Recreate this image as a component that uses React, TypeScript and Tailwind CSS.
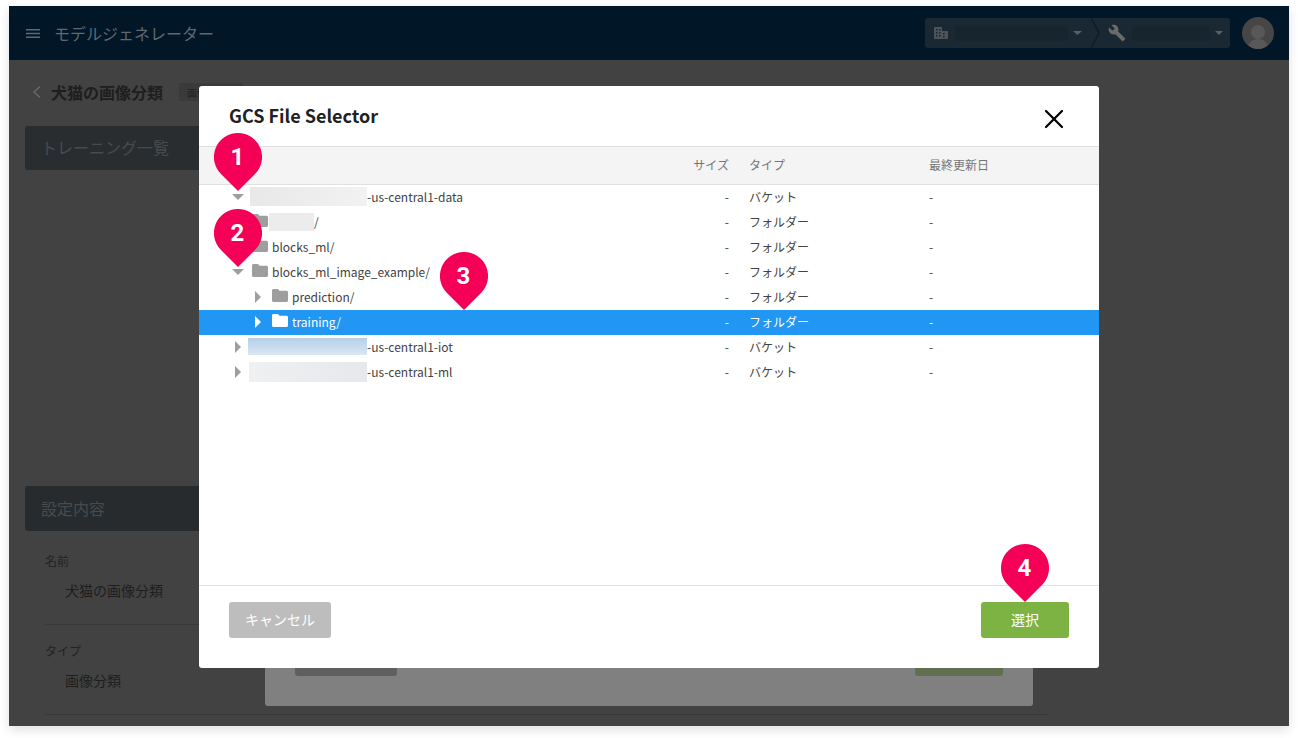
import { X } from 'lucide-react';

const FONT = "font-['Noto_Sans_CJK_JP','Noto_Sans',sans-serif]";

function CaretDown({ light }: { light?: boolean }) {
  return (
    <svg width="12" height="6" viewBox="0 0 12 6" className={light ? 'text-white' : 'text-[#9e9e9e]'}>
      <path d="M0 0h12L6 6z" fill="currentColor" />
    </svg>
  );
}

function CaretRight({ light }: { light?: boolean }) {
  return (
    <svg width="6" height="12" viewBox="0 0 6 12" className={light ? 'text-white' : 'text-[#9e9e9e]'}>
      <path d="M0 0l6 6-6 6z" fill="currentColor" />
    </svg>
  );
}

function Folder({ light }: { light?: boolean }) {
  return (
    <svg width="16" height="13" viewBox="0 0 16 13" className={light ? 'text-white' : 'text-[#9e9e9e]'}>
      <path d="M1.5 0H6l1.5 1.7h7c.8 0 1.5.7 1.5 1.5v8.3c0 .8-.7 1.5-1.5 1.5h-13C.7 13 0 12.300 0 11.500v-10C0 .7.700 0 1.500 0z" fill="currentColor" />
    </svg>
  );
}

interface RowProps {
  level: 0 | 1 | 2;
  open?: boolean;
  noCaret?: boolean;
  blur?: string;
  name: string;
  type: string;
  selected?: boolean;
}

function Row({ level, open, noCaret, blur, name, type, selected }: RowProps) {
  return (
    <div className={`flex h-[25px] items-center pb-[2px] text-[12px] ${selected ? 'bg-[#2196f3] text-white' : 'text-[#424242]'}`}>
      <div className={`flex flex-1 items-center ${level === 2 ? 'pl-[49px]' : 'pl-[29px]'}`}>
        <div className="flex w-5 justify-center">
          {!noCaret && (open ? <CaretDown light={selected} /> : <CaretRight light={selected} />)}
        </div>
        {level > 0 && (
          <div className="ml-1 mr-1 flex -translate-y-px">
            <Folder light={selected} />
          </div>
        )}
        {blur && <div className={blur} />}
        <span>{name}</span>
      </div>
      <div className="w-10 text-right">-</div>
      <div className="ml-5 w-[180px]">{type}</div>
      <div className="w-[170px]">-</div>
    </div>
  );
}

function Pin({ n, className }: { n: number; className: string }) {
  return (
    <div className={`absolute h-[58px] w-12 ${className}`}>
      <svg width="48" height="58" viewBox="0 0 48 58" className="absolute inset-0">
        <path d="M24 0A24 24 0 0 1 41 41L24 58 7 41A24 24 0 0 1 24 0z" fill="#f50057" />
      </svg>
      <div className="relative flex h-12 items-center justify-center pr-px font-['Roboto',sans-serif] text-[24px] font-bold leading-none text-white">
        {n}
      </div>
    </div>
  );
}

function Background() {
  return (
    <div className="absolute inset-0 flex flex-col bg-[#424242]">
      <header className="flex h-[54px] shrink-0 items-center bg-[#011627] pl-[17px] pr-[15px]">
        <svg width="14" height="9" viewBox="0 0 14 9" className="text-[#5e6972]">
          <path d="M0 0h14v1.500H0zM0 3.700h14v1.500H0zM0 7.500h14V9H0z" fill="currentColor" />
        </svg>
        <div className="ml-[14px] text-[16px] text-[#5e6972]">モデルジェネレーター</div>
        <div className="ml-auto flex h-[30px] w-[305px] items-center rounded-[3px] bg-[#1a2833]">
          <svg width="14" height="12" viewBox="0 0 14 12" className="ml-[9px] text-[#4e5358]">
            <path d="M0 0h8v4h6v8H0zM2 2v1.500h1.500V2zM5 2v1.500h1.500V2zM2 5v1.500h1.500V5zM5 5v1.500h1.500V5zM9 6v1.500h1.500V6zM2 8v1.500h1.500V8zM5 8v1.500h1.500V8zM9 9v1.500h1.500V9z" fill="currentColor" />
          </svg>
          <div className="ml-[7px] h-[15px] w-[113px] bg-[#17252f]" />
          <svg width="9" height="4" viewBox="0 0 9 4" className="ml-[5px] text-[#5a5f63]">
            <path d="M0 0h9L4.500 4z" fill="currentColor" />
          </svg>
          <svg width="10" height="30" viewBox="0 0 10 30" className="ml-[9px] text-[#0f1d29]">
            <path d="M0 0l8 15-8 15" fill="none" stroke="currentColor" strokeWidth="1.500" />
          </svg>
          <svg width="18" height="18" viewBox="0 0 24 24" className="ml-[7px] text-[#6a6a6a]">
            <path d="M22.700 19l-9.100-9.100c.9-2.300.4-5-1.500-6.900-2-2-5-2.400-7.400-1.300L9 6 6 9 1.600 4.700C.4 7.100.9 10.100 2.900 12.100c1.900 1.900 4.600 2.400 6.900 1.500l9.100 9.100c.4.400 1 .4 1.400 0l2.300-2.300c.5-.4.500-1.100.100-1.400z" fill="currentColor" />
          </svg>
          <div className="ml-[6px] h-[15px] w-[78px] bg-[#17252f]" />
          <svg width="8" height="4" viewBox="0 0 8 4" className="ml-[5px] text-[#5a5f63]">
            <path d="M0 0h8L4 4z" fill="currentColor" />
          </svg>
        </div>
        <div className="ml-3 flex h-8 w-8 items-end justify-center overflow-hidden rounded-full bg-[#464646]">
          <svg width="24" height="26" viewBox="0 0 24 26" className="text-[#585858]">
            <circle cx="12" cy="9" r="7" fill="currentColor" />
            <path d="M2 26c0-6 4-10 10-10s10 4 10 10z" fill="currentColor" />
          </svg>
        </div>
      </header>
      <main className="flex flex-1 flex-col px-4">
        <div className="mt-5 flex h-6 items-center">
          <svg width="8" height="12" viewBox="0 0 8 12" className="ml-2 text-[#6a6a6a]">
            <path d="M7 .5L1 6l6 5.500" fill="none" stroke="currentColor" strokeWidth="1.300" />
          </svg>
          <div className="ml-[10px] text-[16px] font-bold leading-6 text-[#1e1e1e]">犬猫の画像分類</div>
          <div className="ml-4 flex h-[18px] w-16 items-center rounded-[2px] bg-[#3a3a3a] pl-2 text-[10px] text-[#222222]">画像分類</div>
        </div>
        <div className="mt-[22px] flex h-[44px] w-[200px] items-center rounded-[3px] bg-[#2a2d30] pb-[2px] pl-4 text-[16px] text-[#484b4e]">トレーニング一覧</div>
        <div className="mt-[316px] flex h-[45px] w-[200px] items-center rounded-[3px] bg-[#272b2e] pb-[2px] pl-4 text-[16px] text-[#484b4e]">設定内容</div>
        <div className="pl-5">
          <div className="mt-[22px] text-[12px] leading-4 text-[#232323]">名前</div>
          <div className="ml-5 mt-[11px] text-[14px] leading-5 text-[#1e1e1e]">犬猫の画像分類</div>
          <div className="mt-6 h-px w-[1004px] bg-[#383838]" />
          <div className="mt-[18px] text-[12px] leading-4 text-[#232323]">タイプ</div>
          <div className="ml-5 mt-[11px] text-[14px] leading-5 text-[#1e1e1e]">画像分類</div>
          <div className="mt-6 h-px w-[1004px] bg-[#383838]" />
        </div>
      </main>
      <div className="absolute bottom-5 left-[256px] h-[100px] w-[768px] rounded-[3px] bg-[#808080]">
        <div className="absolute bottom-[30px] left-[30px] h-[20px] w-[102px] rounded-[3px] bg-[#5f5f5f]" />
        <div className="absolute bottom-[30px] right-[30px] h-[20px] w-[88px] rounded-[3px] bg-[#606f50]" />
      </div>
    </div>
  );
}

export default function App() {
  return (
    <div className={`h-[738px] w-[1298px] overflow-hidden bg-white pl-[9px] pt-[6px] ${FONT}`}>
      <div className="relative h-[720px] w-[1280px] shadow-[0_4px_10px_rgba(0,0,0,0.12)]">
        <Background />
        <div className="absolute left-[190px] top-[80px] flex h-[582px] w-[900px] flex-col rounded-[3px] bg-white">
          <div className="flex h-[60px] items-center justify-between pl-[30px] pr-[29px]">
            <div className="mt-[-2px] text-[18px] font-bold leading-none text-[#212121]">GCS File Selector</div>
            <X className="mt-[5px] h-8 w-8 text-black" strokeWidth={1.7} />
          </div>
          <div className="flex h-[39px] items-center border-y border-[#e0e0e0] bg-[#f4f4f4] pb-[2px] text-[12px] text-[#757575]">
            <div className="flex-1" />
            <div className="flex w-10 justify-end whitespace-nowrap">サイズ</div>
            <div className="ml-5 w-[180px]">タイプ</div>
            <div className="w-[170px]">最終更新日</div>
          </div>
          <div className="flex-1">
            <Row level={0} open blur="h-[19px] w-[117px] ml-[2px] bg-gradient-to-r from-[#e8e8e8] to-[#f2f2f2]" name="-us-central1-data" type="バケット" />
            <Row level={1} noCaret blur="h-[18px] w-[45px] -ml-[3px] bg-[#ececec]" name="/" type="フォルダー" />
            <Row level={1} noCaret name="blocks_ml/" type="フォルダー" />
            <Row level={1} open name="blocks_ml_image_example/" type="フォルダー" />
            <Row level={2} name="prediction/" type="フォルダー" />
            <Row level={2} selected name="training/" type="フォルダー" />
            <Row level={0} blur="h-[17px] w-[119px] bg-gradient-to-b from-[#b4cfe9] to-[#dbe7f3]" name="-us-central1-iot" type="バケット" />
            <Row level={0} blur="h-[20px] w-[118px] ml-[1px] bg-gradient-to-r from-[#eef0f2] to-[#e6e8eb]" name="-us-central1-ml" type="バケット" />
          </div>
          <div className="flex h-[83px] justify-between border-t border-[#e0e0e0] px-[30px] pt-4">
            <button className="h-9 w-[102px] rounded-[3px] bg-[#bdbdbd] pb-[2px] text-[14px] text-white">キャンセル</button>
            <button className="h-9 w-[88px] rounded-[3px] bg-[#7cb342] pb-[2px] text-[14px] text-white">選択</button>
          </div>
        </div>
        <Pin n={1} className="left-[205px] top-[127px]" />
        <Pin n={2} className="left-[205px] top-[203px]" />
        <Pin n={3} className="left-[431px] top-[246px]" />
        <Pin n={4} className="left-[992px] top-[538px]" />
      </div>
    </div>
  );
}
